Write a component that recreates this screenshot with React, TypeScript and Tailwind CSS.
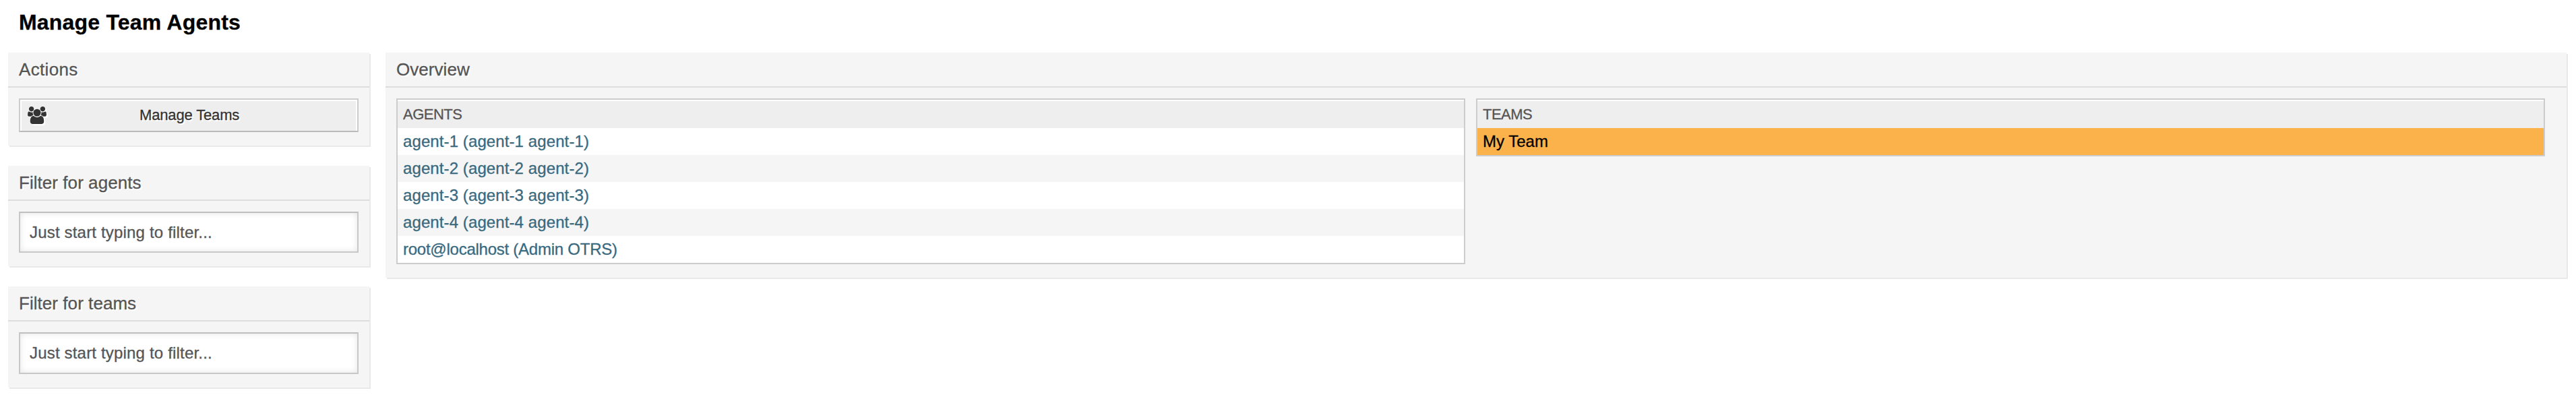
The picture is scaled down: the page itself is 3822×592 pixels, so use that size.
import type { ReactNode } from "react";

const agents = [
  { label: "agent-1 (agent-1 agent-1)", tracking: "tracking-[0.1px]" },
  { label: "agent-2 (agent-2 agent-2)", tracking: "tracking-[0.1px]" },
  { label: "agent-3 (agent-3 agent-3)", tracking: "tracking-[0.1px]" },
  { label: "agent-4 (agent-4 agent-4)", tracking: "tracking-[0.1px]" },
  { label: "root@localhost (Admin OTRS)", tracking: "tracking-[-0.25px]" },
];

function GroupIcon() {
  return (
    <svg viewBox="0 0 1920 1792" className="h-[26px] w-7 [filter:drop-shadow(2px_2px_0_#fff)]" fill="currentColor" aria-hidden="true">
      <path d="M593 896q-162 5-265 128H194q-82 0-138-40.5T0 865q0-353 124-353 6 0 43.5 21t97.5 42.5T384 597q67 0 133-23-5 37-5 66 0 139 81 256zm1071 637q0 120-73 189.5t-194 69.5H523q-121 0-194-69.5T256 1533q0-53 3.5-103.5t14-109T300 1212t43-97.5 62-81 85.5-53.5T602 960q10 0 43 21.5t73 48 107 48 135 21.5 135-21.5 107-48 73-48 43-21.5q61 0 111.5 20t85.5 53.5 62 81 43 97.5 26.5 108.5 14 109 3.5 103.5zM640 256q0 106-75 181t-181 75-181-75-75-181 75-181T384 0t181 75 75 181zm704 384q0 159-112.5 271.5T960 1024 688.5 911.5 576 640t112.5-271.5T960 256t271.5 112.5T1344 640zm576 225q0 78-56 118.5t-138 40.5h-134q-103-123-265-128 81-117 81-256 0-29-5-66 66 23 133 23 59 0 119-21.5t97.5-42.5 43.5-21q124 0 124 353zm-128-609q0 106-75 181t-181 75-181-75-75-181 75-181 181-75 181 75 75 181z" />
    </svg>
  );
}

function Widget({
  title,
  children,
  className = "",
  titleClassName = "tracking-[0.05px]",
}: {
  title: string;
  children: ReactNode;
  className?: string;
  titleClassName?: string;
}) {
  return (
    <section className={`bg-[#f5f5f5] shadow-[2px_2px_0_#e9e9e9] ${className}`}>
      <h2
        className={`h-[52px] border-b-2 border-[#ddd] pl-4 text-[26px] leading-[50px] text-[#555] [text-shadow:2px_2px_0_#fff] ${titleClassName}`}
      >
        {title}
      </h2>
      {children}
    </section>
  );
}

function Filter({ className }: { className: string }) {
  return (
    <input
      placeholder="Just start typing to filter..."
      className={`mx-4 mt-4 block w-[504px] border-2 border-[#c8c8c8] border-t-[#bfbfbf] bg-white px-[14px] text-2xl tracking-[0.18px] text-[#555] shadow-[inset_0_0_10px_#e4e4e4] outline-none placeholder:text-[#555] placeholder:opacity-100 ${className}`}
    />
  );
}

function Table({ head, children }: { head: string; children: ReactNode }) {
  return (
    <div className="w-[1586px] border-2 border-[#ccc] bg-white pt-[2px]">
      <div className="h-10 bg-[#eee] pl-2 text-[22px] leading-10 tracking-[-0.5px] text-[#555]">{head}</div>
      {children}
    </div>
  );
}

export default function App() {
  return (
    <main className="h-[592px] w-[3822px] bg-white font-['Liberation_Sans',Arial,sans-serif] [-webkit-text-stroke:0.3px]">
      <h1 className="h-[78px] pl-7 pt-[15px] text-[32px] font-bold leading-9 tracking-[0.2px] text-black">Manage Team Agents</h1>
      <div className="flex items-start gap-6 pl-3">
        <aside className="w-[536px]">
          <Widget title="Actions" className="h-[138px]" titleClassName="tracking-[0.35px]">
            <button className="mx-4 mt-4 flex h-[50px] w-[504px] items-center border-2 border-[#ccc] border-b-[#bbb] bg-[#eee] pl-[11px] text-[22px] text-[#333] shadow-[inset_2px_2px_0_#fff,inset_-2px_0_0_#fff] [text-shadow:2px_2px_0_#fff]">
              <GroupIcon />
              <span className="pb-0.5 pl-[138px] tracking-[-0.15px]">Manage Teams</span>
            </button>
          </Widget>
          <Widget title="Filter for agents" className="mt-[30px] h-[149px]">
            <Filter className="h-[61px]" />
          </Widget>
          <Widget title="Filter for teams" className="mt-[30px] h-[150px]">
            <Filter className="h-[62px]" />
          </Widget>
        </aside>
        <Widget title="Overview" className="h-[334px] w-[3236px]">
          <div className="flex items-start gap-4 pl-4 pt-4">
            <Table head="AGENTS">
              {agents.map(({ label, tracking }) => (
                <a
                  key={label}
                  className={`block h-10 pl-2 text-2xl leading-10 text-[#38697f] odd:bg-[#f5f5f5] even:bg-white ${tracking}`}
                >
                  {label}
                </a>
              ))}
            </Table>
            <Table head="TEAMS">
              <a className="block h-10 bg-[#fbb24b] pl-2 text-2xl leading-10 text-black">My Team</a>
            </Table>
          </div>
        </Widget>
      </div>
    </main>
  );
}
